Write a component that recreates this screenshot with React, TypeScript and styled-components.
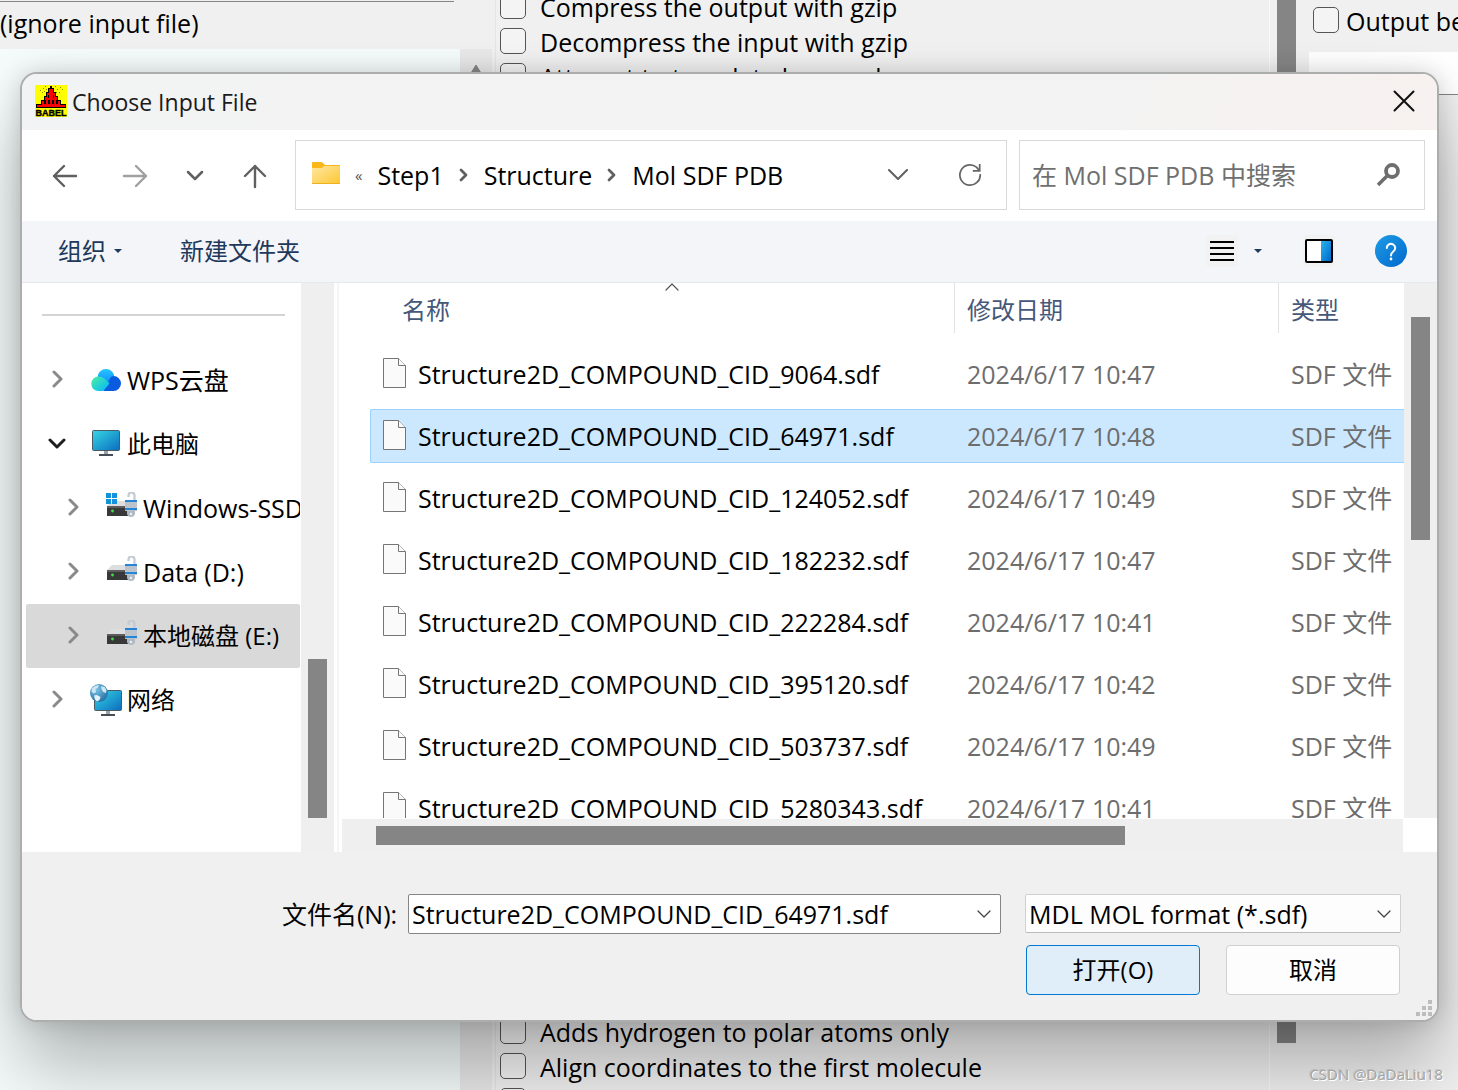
import React, { useState } from "react";
import styled, { createGlobalStyle } from "styled-components";

const GlobalStyle = createGlobalStyle`
  *, *::before, *::after { box-sizing: border-box; }
  body { margin: 0; overflow: hidden; }
  body, button, input, select {
    font-family: "Open Sans", "Noto Sans CJK SC", sans-serif;
    font-size: 25px;
    line-height: 32px;
    color: #000;
  }
  button { padding: 0; border: 0; background: none; cursor: pointer; }
`;

/* ---------- main window behind the dialog ---------- */

const Desktop = styled.div`
  position: relative;
  display: flex;
  height: 100vh;
  overflow: hidden;
  background: #f0f0f0;
`;

const InputPane = styled.section`
  display: grid;
  grid-template: 49px 1fr / 1fr 32px;
  flex: 0 0 496px;
  padding-right: 3px;
  border-right: 1px solid #e4e4e4;
`;

const InputNote = styled.div`
  grid-column: 1 / -1;
  padding-top: 7px;
  white-space: nowrap;
  &::before {
    content: "";
    position: absolute;
    top: 1px;
    left: 0;
    width: 454px;
    height: 1px;
    background: #858585;
  }
`;

const InputArea = styled.div`
  background: #f4fbfa;
`;

const ArrowTrack = styled.div`
  display: flex;
  justify-content: center;
  align-items: flex-start;
  padding-top: 15px;
  background: #e8e8e8;
`;

const OptionsPane = styled.section`
  display: flex;
  flex: 1 1 auto;
  flex-direction: column;
  justify-content: space-between;
  min-width: 0;
  border-right: 1px solid #fafafa;
`;

const OptionList = styled.div<{ $end?: boolean }>`
  margin: ${(p) => (p.$end ? "0 0 -29px" : "-11px 0 0")};
  padding-left: 4px;
`;

const Option = styled.label<{ $gap?: number }>`
  display: flex;
  align-items: center;
  gap: ${(p) => p.$gap ?? 14}px;
  height: 35px;
  white-space: nowrap;
`;

const CheckBox = styled.input`
  flex: none;
  appearance: none;
  width: 26px;
  height: 26px;
  margin: 0 0 2px;
  border: 1px solid #555;
  border-radius: 5px;
  background: rgba(255, 255, 255, 0.3);
  &:checked { background: #0067c0; }
`;

const OptionsTrack = styled.div`
  display: flex;
  flex: 0 0 39px;
  padding-left: 7px;
`;

const OptionsThumb = styled.div`
  width: 19px;
  height: calc(100% - 47px);
  background: #858585;
`;

const OutputPane = styled.section`
  flex: 0 0 149px;
  overflow: hidden;
`;

const OutputHead = styled.div`
  height: 52px;
  padding: 3px 0 0 4px;
`;

const OutputName = styled.div`
  height: 43px;
  border-bottom: 1px solid #858585;
  background: #fff;
`;

const Watermark = styled.div`
  position: absolute;
  right: 15px;
  bottom: 4px;
  font-size: 15px;
  line-height: 24px;
  color: #a4a4a4;
  text-shadow: 1px 1px 0 #fff, -1px -1px 0 #8f8f8f55;
`;

/* ---------- dialog frame ---------- */

const Dialog = styled.div`
  position: absolute;
  top: 72px;
  left: 20px;
  right: 19px;
  overflow: hidden;
  border: 2px solid #acaeae;
  border-radius: 17px;
  background: #fff;
  box-shadow: 0 46px 72px rgba(0, 0, 0, 0.27), 0 0 24px rgba(0, 0, 0, 0.16);
`;

const TitleBar = styled.header`
  display: flex;
  align-items: center;
  gap: 5px;
  height: 56px;
  padding: 0 0 2px 13px;
  background: linear-gradient(100deg, #f2f3f4 0, #f3f3f3 20%, #f3f3f3 75%, #f7f1ef 100%);
`;

const Title = styled.h1`
  flex: 1;
  margin: 0;
  padding-top: 2px;
  font-size: 23px;
  font-weight: 400;
  line-height: 32px;
  color: #1a1a1a;
`;

const CloseButton = styled.button`
  display: grid;
  place-items: center;
  width: 66px;
  height: 54px;
`;

const NavBar = styled.nav`
  display: flex;
  align-items: center;
  height: 91px;
  padding: 0 12px 2px 13px;
`;

const NavButton = styled.button<{ $wide?: boolean }>`
  display: grid;
  flex: none;
  place-items: center;
  width: 60px;
  height: 60px;
  padding-top: 2px;
  margin-right: ${(p) => (p.$wide ? 10 : 0)}px;
`;

const AddressBox = styled.div`
  display: flex;
  flex: 1;
  align-items: center;
  height: 70px;
  margin-right: 12px;
  padding-left: 16px;
  border: 1px solid #d9d9d9;
`;

const Crumbs = styled.div`
  display: flex;
  flex: 1;
  align-items: center;
  gap: 15px;
  white-space: nowrap;
`;

const Overflow = styled.span`
  font-size: 15px;
  color: #555;
`;

const Crumb = styled.a`
  color: #000;
  text-decoration: none;
`;

const BoxButton = styled.button`
  display: grid;
  place-items: center;
  width: 72px;
  height: 68px;
`;

const SearchBox = styled.div`
  display: flex;
  flex: 0 0 406px;
  align-items: center;
  height: 70px;
  padding-left: 12px;
  border: 1px solid #d9d9d9;
`;

const SearchInput = styled.input`
  flex: 1;
  min-width: 0;
  padding: 0;
  border: 0;
  outline: 0;
  background: none;
  &::placeholder { color: #6f6f6f; opacity: 1; }
`;

const ToolBar = styled.div`
  display: flex;
  align-items: center;
  height: 62px;
  padding: 0 30px 2px 36px;
  border-bottom: 1px solid #e6e8eb;
  background: #f4f5f8;
`;

const ToolText = styled.button`
  display: flex;
  align-items: center;
  gap: 8px;
  margin-right: 58px;
  font-size: 24px;
  color: #1e395b;
`;

const ToolSpacer = styled.div`
  flex: 1;
`;

const ToolIcon = styled.button<{ $gap: number; $shade?: boolean }>`
  display: grid;
  place-items: center;
  height: 32px;
  min-width: ${(p) => (p.$shade ? 32 : 8)}px;
  margin-right: ${(p) => p.$gap}px;
  border-radius: 4px;
  background: ${(p) => (p.$shade ? "#f2f2f2" : "none")};
`;

/* ---------- dialog body ---------- */

const Body = styled.div`
  display: flex;
  height: 569px;
`;

const Sidebar = styled.aside`
  flex: 0 0 279px;
  overflow: hidden;
  padding: 31px 1px 0 4px;
`;

const Rule = styled.hr`
  height: 2px;
  margin: 0 15px 32px 16px;
  border: 0;
  background: #d4d4d4;
`;

const Tree = styled.ul`
  margin: 0;
  padding: 0;
  list-style: none;
`;

const TreeItem = styled.li<{ $child?: boolean; $active?: boolean }>`
  display: flex;
  align-items: center;
  height: 64px;
  padding-left: ${(p) => (p.$child ? 37 : 21)}px;
  overflow: hidden;
  border-radius: 2px;
  white-space: nowrap;
  background: ${(p) => (p.$active ? "#d9d9d9" : "none")};
`;

const TreeText = styled.span<{ $han: boolean }>`
  font-size: ${(p) => (p.$han ? 24 : 25)}px;
`;

const Twisty = styled.button`
  display: grid;
  flex: none;
  place-items: center;
  width: 20px;
  height: 32px;
  margin-right: 23px;
`;

const TreeIcon = styled.span`
  display: grid;
  flex: none;
  place-items: center;
  width: 32px;
  margin-right: 5px;
`;

const SideTrack = styled.div`
  display: flex;
  flex: 0 0 33px;
  flex-direction: column;
  justify-content: flex-end;
  padding: 0 7px 34px;
  background: #efefef;
`;

const Thumb = styled.div<{ $length: string }>`
  height: ${(p) => p.$length};
  background: #858585;
`;

const Splitter = styled.div`
  flex: 0 0 5px;
  border-right: 2px solid #f5f5f5;
`;

const FilePane = styled.div`
  display: grid;
  flex: 1;
  grid-template: 535px 34px / 1fr 33px;
  min-width: 0;
`;

const FileView = styled.div`
  overflow: hidden;
  padding-left: 31px;
`;

const RightTrack = styled.div`
  padding: 34px 7px 0;
  background: #efefef;
`;

const BottomTrack = styled.div`
  margin: 1px 1px 0 3px;
  padding: 7px 28px 0 34px;
  background: #efefef;
`;

const BottomThumb = styled.div`
  width: 75%;
  height: 19px;
  background: #858585;
`;

const FileTable = styled.table`
  width: 100%;
  table-layout: fixed;
  border-spacing: 0;
  white-space: nowrap;
`;

const NameCol = styled.col``;
const DateCol = styled.col`
  width: 324px;
`;
const TypeCol = styled.col`
  width: 125px;
`;

const HeadCell = styled.th`
  height: 60px;
  padding: 0;
  font-weight: 400;
  text-align: left;
  vertical-align: top;
`;

const HeadBox = styled.div<{ $main?: boolean; $last?: boolean }>`
  display: flex;
  flex-direction: column;
  height: 50px;
  padding-left: ${(p) => (p.$main ? 20 : 0)}px;
  border-right: ${(p) => (p.$last ? "0" : "1px solid #e2e2e2")};
`;

const SortMark = styled.span`
  display: flex;
  justify-content: center;
  height: 11px;
`;

const HeadText = styled.span`
  padding-left: 12px;
  font-size: 24px;
  color: #44587a;
`;

const Cell = styled.td`
  height: 62px;
  padding: 0;
`;

const CellBox = styled.div<{ $active?: boolean; $main?: boolean }>`
  display: flex;
  align-items: center;
  gap: 12px;
  height: 54px;
  padding-left: 12px;
  border: 1px solid ${(p) => (p.$active ? "#99d1ff" : "transparent")};
  border-right: 0;
  border-left-width: ${(p) => (p.$main ? 1 : 0)}px;
  border-radius: ${(p) => (p.$main ? "2px 0 0 2px" : "0")};
  color: ${(p) => (p.$main ? "#000" : "#6d6d6d")};
  background: ${(p) => (p.$active ? "#cce8ff" : "none")};
`;

/* ---------- dialog footer ---------- */

const Footer = styled.footer`
  position: relative;
  display: flex;
  flex-direction: column;
  gap: 11px;
  height: 168px;
  padding: 42px 36px 0 260px;
  background: #f0f0f0;
`;

const FooterRow = styled.div<{ $gap: number; $inset?: boolean }>`
  display: flex;
  align-items: flex-start;
  justify-content: flex-end;
  gap: ${(p) => p.$gap}px;
  padding-right: ${(p) => (p.$inset ? 1 : 0)}px;
`;

const NameField = styled.div`
  display: flex;
  flex: 1;
  align-items: center;
  gap: 12px;
`;

const FieldLabel = styled.label`
  flex: none;
  width: 114px;
  white-space: nowrap;
`;

const Combo = styled.div`
  display: flex;
  flex: 1;
  align-items: center;
  height: 40px;
  padding-left: 3px;
  border: 1px solid #858585;
  border-radius: 2px;
  background: #fff;
`;

const ComboInput = styled.input`
  flex: 1;
  min-width: 0;
  padding: 0;
  border: 0;
  outline: 0;
  background: none;
`;

const ComboButton = styled.button`
  display: grid;
  place-items: center;
  width: 32px;
  height: 38px;
`;

const SelectWrap = styled.div`
  position: relative;
  flex: 0 0 376px;
  svg {
    position: absolute;
    top: 16px;
    right: 10px;
    pointer-events: none;
  }
`;

const TypeSelect = styled.select`
  appearance: none;
  display: block;
  width: 100%;
  height: 39px;
  padding: 0 32px 0 3px;
  border: 1px solid #d0d0d0;
  border-bottom-color: #bcbcbc;
  border-radius: 2px;
  background: #fdfdfd;
`;

const PushButton = styled.button<{ $primary?: boolean }>`
  width: 174px;
  height: 50px;
  border: 1px solid ${(p) => (p.$primary ? "#0078d4" : "#d0d0d0")};
  border-radius: 4px;
  font-size: 24px;
  background: ${(p) => (p.$primary ? "#e0eef9" : "#fdfdfd")};
`;

const Grip = styled.svg`
  position: absolute;
  right: 5px;
  bottom: 4px;
`;

/* ---------- drawings ---------- */

const Stroke = ({ w, h, d, color = "#606060", width = 2 }: { w: number; h: number; d: string; color?: string; width?: number }) => (
  <svg width={w} height={h} viewBox={`0 0 ${w} ${h}`} fill="none" stroke={color} strokeWidth={width} strokeLinecap="round" strokeLinejoin="round" aria-hidden="true">
    <path d={d} />
  </svg>
);

const Caret = () => (
  <svg width="8" height="4" viewBox="0 0 8 4" aria-hidden="true">
    <path d="M0 0H8L4 4Z" fill="#1e395b" />
  </svg>
);

const SmallChevron = () => <Stroke w={14} h={8} d="M1 1L7 7L13 1" color="#444" width={1.3} />;

const BabelIcon = () => (
  <svg width="32" height="32" viewBox="0 0 32 32" shapeRendering="crispEdges" aria-hidden="true">
    <rect width="32" height="32" fill="#ff0" />
    <path d="M15 1h2v2h2v4h2v4h2v4h3v4h5v4H1v-4h5v-4h3v-4h2V7h2V3h2z" fill="#000" />
    <path d="M14 4h4v4h2v4h2v4h3v4h5v2H2v-2h5v-4h3v-4h2V8h2z" fill="#f00" />
    <path d="M13 10h1v3h-1zM18 10h1v3h-1zM9 15h2v4H9zM13 15h2v4h-2zM17 15h2v4h-2zM21 15h2v4h-2z" fill="#000" />
    <path d="M5 5h1v1H5zM8 3h1v1H8zM10 1h1v1h-1zM9 6h1v1H9zM7 7h1v1H7zM11 4h1v1h-1zM20 1h1v1h-1zM22 4h1v1h-1zM25 2h1v1h-1zM24 7h1v1h-1zM27 4h1v1h-1zM21 7h1v1h-1z" fill="#880" />
    <text x="16" y="31" textAnchor="middle" fontFamily="Liberation Sans" fontSize="9" fontWeight="700" stroke="#000" strokeWidth=".4">BABEL</text>
  </svg>
);

const FolderIcon = () => (
  <svg width="28" height="26" viewBox="0 0 28 26" aria-hidden="true">
    <defs>
      <linearGradient id="folder" x1="0" y1="0" x2="1" y2="1">
        <stop offset="0" stopColor="#ffe7a2" />
        <stop offset="1" stopColor="#fdc733" />
      </linearGradient>
    </defs>
    <path d="M0 1q0-1 1-1h8q1 0 2 1l2 2h14q1 0 1 1v5H0z" fill="#f9b719" />
    <path d="M0 6h9q1 0 2-1l1-1h15q1 0 1 1v16q0 1-1 1H1q-1 0-1-1z" fill="url(#folder)" />
    <path d="M0 21.500h28" stroke="#eeb120" />
  </svg>
);

const RefreshIcon = () => (
  <svg width="24" height="24" viewBox="0 0 26 26" fill="none" stroke="#666" strokeWidth="1.900" aria-hidden="true">
    <path d="M24 12A11 11 0 1 1 20 4.500L23 8" />
    <path d="M23.500 1V8.500H16" />
  </svg>
);

const SearchIcon = () => (
  <svg width="24" height="24" viewBox="0 0 24 24" fill="none" stroke="#6e6e6e" aria-hidden="true">
    <circle cx="16" cy="8" r="6" strokeWidth="3.800" />
    <path d="M11.500 12.500L2 22" strokeWidth="3.600" />
  </svg>
);

const ListIcon = () => (
  <svg width="24" height="20" viewBox="0 0 24 20" aria-hidden="true">
    <path d="M0 1H24M0 7H24M0 13H24M0 19H24" stroke="#000" strokeWidth="2" />
  </svg>
);

const PreviewIcon = () => (
  <svg width="28" height="24" viewBox="0 0 28 24" aria-hidden="true">
    <defs>
      <linearGradient id="preview" x1="0" y1="0" x2="1" y2="1">
        <stop offset="0" stopColor="#2bb3ee" />
        <stop offset="1" stopColor="#0069c8" />
      </linearGradient>
    </defs>
    <rect x="1" y="1" width="26" height="22" rx="1" fill="#fff" stroke="#000" strokeWidth="2" />
    <rect x="16" y="2" width="10" height="20" fill="url(#preview)" />
  </svg>
);

const HelpIcon = () => (
  <svg width="32" height="32" viewBox="0 0 32 32" aria-hidden="true">
    <defs>
      <linearGradient id="help" x1="0" y1="0" x2="1" y2="1">
        <stop offset="0" stopColor="#1f9ce6" />
        <stop offset="1" stopColor="#0068cc" />
      </linearGradient>
    </defs>
    <circle cx="16" cy="16" r="16" fill="url(#help)" />
    <path d="M11.800 13a4.200 4.200 0 1 1 6.500 3.500c-1.500 1-2.300 1.700-2.300 4" fill="none" stroke="#fff" strokeWidth="2" strokeLinecap="round" />
    <circle cx="16" cy="24" r="1.400" fill="#fff" />
  </svg>
);

const PageIcon = () => (
  <svg width="23" height="32" viewBox="0 0 23 32" fill="#fafafa" stroke="#757575" aria-hidden="true">
    <path d="M.5.500H15.500L22.500 7.500V29.500H.5Z" />
    <path d="M15.500.500V7.500H22.500" />
  </svg>
);

const CloudIcon = () => (
  <svg width="30" height="22" viewBox="0 0 30 22" aria-hidden="true">
    <defs>
      <linearGradient id="cloudA" x1="0" y1="0" x2="1" y2="1">
        <stop offset="0" stopColor="#4df0a0" />
        <stop offset="1" stopColor="#00b4ff" />
      </linearGradient>
      <linearGradient id="cloudB" x1="0" y1="0" x2="0" y2="1">
        <stop offset="0" stopColor="#28c4ff" />
        <stop offset="1" stopColor="#0a84ff" />
      </linearGradient>
    </defs>
    <circle cx="15" cy="8.500" r="8.500" fill="url(#cloudB)" />
    <path d="M22.500 7a7.500 7.500 0 0 1 0 15H12l5-7c1-5 3-8 5.500-8z" fill="#0a5be0" />
    <path d="M7.500 7.500c3 0 5 1 6.500 2.500l4.500 4.500-5 6q-1.500 1.500-3 1.500H7.500a7.250 7.250 0 0 1 0-14.500z" fill="url(#cloudA)" />
  </svg>
);

const MonitorShape = () => (
  <>
    <defs>
      <linearGradient id="screen" x1="0" y1="0" x2="1" y2="1">
        <stop offset="0" stopColor="#35d6e4" />
        <stop offset="1" stopColor="#0b6cbf" />
      </linearGradient>
    </defs>
    <path d="M12 20h4v4h-4z" fill="#9aa3ab" />
    <path d="M7 24h14v2H7z" fill="#454e57" />
    <rect x=".5" y=".5" width="27" height="20" rx="1" fill="url(#screen)" stroke="#4c5a66" />
  </>
);

const MonitorIcon = () => (
  <svg width="28" height="28" viewBox="0 0 28 28" aria-hidden="true">
    <MonitorShape />
  </svg>
);

const NetworkIcon = () => (
  <svg width="32" height="32" viewBox="0 0 32 32" aria-hidden="true">
    <defs>
      <radialGradient id="globe" cx=".35" cy=".3" r=".8">
        <stop offset="0" stopColor="#7cc4e8" />
        <stop offset="1" stopColor="#1f6a9c" />
      </radialGradient>
    </defs>
    <g transform="translate(4 6)">
      <MonitorShape />
    </g>
    <circle cx="9" cy="9" r="9" fill="url(#globe)" />
    <path d="M2 4.500L5 2L9 1L8 3.500L5.500 5L6 8L4 9.500L1.500 8Z" fill="#cfe7f4" />
    <path d="M11 2L14.500 3L16.500 6L16 9L13 8L11.500 5Z" fill="#cfe7f4" />
    <path d="M4 11.500L7 11L10.500 13L9.500 16L7 17.500L5 15.500Z" fill="#e4f2f9" />
  </svg>
);

const DriveIcon = ({ system }: { system?: boolean }) => (
  <svg width="32" height="32" viewBox="0 0 32 32" aria-hidden="true">
    <path d="M6 9H27V14H1Z" fill="#dcdee0" />
    <path d="M1 14H23V24H1Z" fill="#383838" />
    <path d="M1 14H23V16H1Z" fill="#5c5c5c" />
    <circle cx="6.500" cy="19" r="1.400" fill="#3fe04a" />
    {system && <path d="M0 1H5V6H0ZM6 1H11V6H6ZM0 7H5V12H0ZM6 7H11V12H6Z" fill="#1592dc" />}
    <path d="M22.500 5V3.500a3 3 0 0 1 6 0V8" fill="none" stroke="#c3cad1" strokeWidth="2.200" />
    <path d="M21 18H29V22Q28 25 25 25Q22 25 21 22Z" fill="#b0b9c3" />
    <rect x="19" y="8" width="12" height="11" fill="#bcc3cb" />
    <path d="M19 8H31V10H19ZM19 16H31V18H19Z" fill="#2484d8" />
    <circle cx="25" cy="22" r="1.200" fill="#eef1f4" />
  </svg>
);

/* ---------- data ---------- */

const topOptions = ["Compress the output with gzip", "Decompress the input with gzip", "Attempt to translate keywords"];
const bottomOptions = ["Adds hydrogen to polar atoms only", "Align coordinates to the first molecule"];

const places = [
  { name: "WPS云盘", icon: <CloudIcon /> },
  { name: "此电脑", icon: <MonitorIcon />, open: true, han: true },
  { name: "Windows-SSD", icon: <DriveIcon system />, child: true },
  { name: "Data (D:)", icon: <DriveIcon />, child: true },
  { name: "本地磁盘 (E:)", icon: <DriveIcon />, child: true, active: true, han: true },
  { name: "网络", icon: <NetworkIcon />, han: true },
];

const files = [
  ["9064", "10:47"],
  ["64971", "10:48"],
  ["124052", "10:49"],
  ["182232", "10:47"],
  ["222284", "10:41"],
  ["395120", "10:42"],
  ["503737", "10:49"],
  ["5280343", "10:41"],
].map(([cid, time]) => ({ name: `Structure2D_COMPOUND_CID_${cid}.sdf`, date: `2024/6/17 ${time}` }));

export default function App() {
  const [fileName, setFileName] = useState(files[1].name);

  return (
    <Desktop>
      <GlobalStyle />
      <InputPane>
        <InputNote>(ignore input file)</InputNote>
        <InputArea />
        <ArrowTrack>
          <svg width="12" height="10" viewBox="0 0 12 10" aria-hidden="true">
            <path d="M6 1L11 9H1Z" fill="#858585" stroke="#858585" strokeLinejoin="round" />
          </svg>
        </ArrowTrack>
      </InputPane>
      <OptionsPane>
        <OptionList>
          {topOptions.map((text) => (
            <Option key={text}>
              <CheckBox type="checkbox" />
              {text}
            </Option>
          ))}
        </OptionList>
        <OptionList $end>
          {bottomOptions.map((text) => (
            <Option key={text}>
              <CheckBox type="checkbox" />
              {text}
            </Option>
          ))}
          <Option>
            <CheckBox type="checkbox" />
          </Option>
        </OptionList>
      </OptionsPane>
      <OptionsTrack>
        <OptionsThumb />
      </OptionsTrack>
      <OutputPane>
        <OutputHead>
          <Option $gap={7}>
            <CheckBox type="checkbox" />
            Output be
          </Option>
        </OutputHead>
        <OutputName />
      </OutputPane>

      <Dialog role="dialog" aria-labelledby="dialog-title">
        <TitleBar>
          <BabelIcon />
          <Title id="dialog-title">Choose Input File</Title>
          <CloseButton aria-label="Close">
            <Stroke w={22} h={22} d="M1.500 1.500L20.500 20.500M20.500 1.500L1.500 20.500" color="#111" />
          </CloseButton>
        </TitleBar>

        <NavBar>
          <NavButton $wide aria-label="Back">
            <Stroke w={26} h={24} d="M24 12H2M12 2L2 12L12 22" width={2.4} />
          </NavButton>
          <NavButton aria-label="Forward">
            <Stroke w={26} h={24} d="M2 12H24M14 2L24 12L14 22" color="#a0a0a0" width={2.4} />
          </NavButton>
          <NavButton aria-label="Recent">
            <Stroke w={18} h={12} d="M2 2L9 9L16 2" width={2.5} />
          </NavButton>
          <NavButton $wide aria-label="Up">
            <Stroke w={24} h={26} d="M12 24V3M2 13L12 3L22 13" width={2.4} />
          </NavButton>
          <AddressBox>
            <Crumbs>
              <FolderIcon />
              <Overflow>«</Overflow>
              <Crumb href="#step1">Step1</Crumb>
              <Stroke w={10} h={14} d="M2 2L7 7L2 12" width={2.8} />
              <Crumb href="#structure">Structure</Crumb>
              <Stroke w={10} h={14} d="M2 2L7 7L2 12" width={2.8} />
              <Crumb href="#mol">Mol SDF PDB</Crumb>
            </Crumbs>
            <BoxButton aria-label="History">
              <Stroke w={20} h={12} d="M1 1L10 10L19 1" />
            </BoxButton>
            <BoxButton aria-label="Refresh">
              <RefreshIcon />
            </BoxButton>
          </AddressBox>
          <SearchBox>
            <SearchInput type="search" aria-label="Search" placeholder="在 Mol SDF PDB 中搜索" />
            <BoxButton aria-label="Go">
              <SearchIcon />
            </BoxButton>
          </SearchBox>
        </NavBar>

        <ToolBar>
          <ToolText>
            组织
            <Caret />
          </ToolText>
          <ToolText>新建文件夹</ToolText>
          <ToolSpacer />
          <ToolIcon $gap={16} $shade aria-label="View">
            <ListIcon />
          </ToolIcon>
          <ToolIcon $gap={41} aria-label="More views">
            <Caret />
          </ToolIcon>
          <ToolIcon $gap={40} $shade aria-label="Preview pane">
            <PreviewIcon />
          </ToolIcon>
          <ToolIcon $gap={0} aria-label="Help">
            <HelpIcon />
          </ToolIcon>
        </ToolBar>

        <Body>
          <Sidebar>
            <Rule />
            <Tree>
              {places.map((p) => (
                <TreeItem key={p.name} $child={p.child} $active={p.active}>
                  <Twisty aria-label={p.open ? "Collapse" : "Expand"}>
                    {p.open ? (
                      <Stroke w={18} h={12} d="M2 2L9 9L16 2" color="#1f1f1f" width={3} />
                    ) : (
                      <Stroke w={12} h={20} d="M3 2L10 9L3 16" color="#8a8a8a" width={3} />
                    )}
                  </Twisty>
                  <TreeIcon>{p.icon}</TreeIcon>
                  <TreeText $han={!!p.han}>{p.name}</TreeText>
                </TreeItem>
              ))}
            </Tree>
          </Sidebar>
          <SideTrack>
            <Thumb $length="159px" />
          </SideTrack>
          <Splitter />
          <FilePane>
            <FileView>
              <FileTable>
                <colgroup>
                  <NameCol />
                  <DateCol />
                  <TypeCol />
                </colgroup>
                <thead>
                  <tr>
                    <HeadCell>
                      <HeadBox $main>
                        <SortMark>
                          <Stroke w={14} h={9} d="M1 7L7 1L13 7" color="#555" width={1.2} />
                        </SortMark>
                        <HeadText>名称</HeadText>
                      </HeadBox>
                    </HeadCell>
                    <HeadCell>
                      <HeadBox>
                        <SortMark />
                        <HeadText>修改日期</HeadText>
                      </HeadBox>
                    </HeadCell>
                    <HeadCell>
                      <HeadBox $last>
                        <SortMark />
                        <HeadText>类型</HeadText>
                      </HeadBox>
                    </HeadCell>
                  </tr>
                </thead>
                <tbody>
                  {files.map((f) => {
                    const active = f.name === files[1].name;
                    return (
                      <tr key={f.name} onClick={() => setFileName(f.name)}>
                        <Cell>
                          <CellBox $main $active={active}>
                            <PageIcon />
                            {f.name}
                          </CellBox>
                        </Cell>
                        <Cell>
                          <CellBox $active={active}>{f.date}</CellBox>
                        </Cell>
                        <Cell>
                          <CellBox $active={active}>SDF 文件</CellBox>
                        </Cell>
                      </tr>
                    );
                  })}
                </tbody>
              </FileTable>
            </FileView>
            <RightTrack>
              <Thumb $length="223px" />
            </RightTrack>
            <BottomTrack>
              <BottomThumb />
            </BottomTrack>
          </FilePane>
        </Body>

        <Footer>
          <FooterRow $gap={24}>
            <NameField>
              <FieldLabel htmlFor="file-name">文件名(N):</FieldLabel>
              <Combo>
                <ComboInput id="file-name" value={fileName} onChange={(e) => setFileName(e.target.value)} />
                <ComboButton aria-label="Recent names">
                  <SmallChevron />
                </ComboButton>
              </Combo>
            </NameField>
            <SelectWrap>
              <TypeSelect aria-label="File type">
                <option>MDL MOL format (*.sdf)</option>
              </TypeSelect>
              <SmallChevron />
            </SelectWrap>
          </FooterRow>
          <FooterRow $gap={26} $inset>
            <PushButton $primary>打开(O)</PushButton>
            <PushButton>取消</PushButton>
          </FooterRow>
          <Grip width="16" height="16" viewBox="0 0 16 16" aria-hidden="true">
            <path d="M12 0h4v4h-4zM6 6h4v4H6zM12 6h4v4h-4zM0 12h4v4H0zM6 12h4v4H6zM12 12h4v4h-4z" fill="#bdbdbd" />
          </Grip>
        </Footer>
      </Dialog>
      <Watermark>CSDN @DaDaLiu18</Watermark>
    </Desktop>
  );
}
